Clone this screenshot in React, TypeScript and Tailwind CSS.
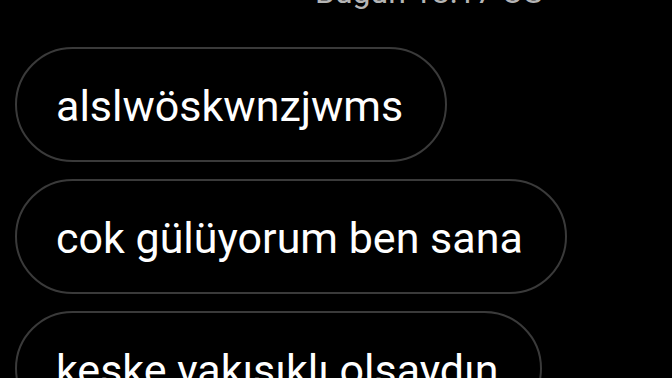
const messages = ["alslwöskwnzjwms", "cok gülüyorum ben sana", "keske yakısıklı olsaydın"]

function Bubble({ text }: { text: string }) {
  return (
    <div className="flex h-[115px] shrink-0 items-center rounded-full border-2 border-[#3a3a3a] pl-[39px] pr-[42px] pt-[3px] text-[43px] text-white">
      <span className="whitespace-nowrap leading-none">{text}</span>
    </div>
  )
}

export default function App() {
  return (
    <div
      className="h-[378px] w-[672px] overflow-hidden bg-black"
      style={{ fontFamily: "Roboto, 'Noto Sans', sans-serif" }}
    >
      <div className="-mt-[24px] pl-[315px] text-[32px] leading-none text-[#b5b5b5] whitespace-nowrap">
        Bugün 18:17 ÖS
      </div>
      <div className="mt-[39px] flex flex-col items-start gap-[17px] pl-[15px]">
        {messages.map((m) => (
          <Bubble key={m} text={m} />
        ))}
      </div>
    </div>
  )
}
